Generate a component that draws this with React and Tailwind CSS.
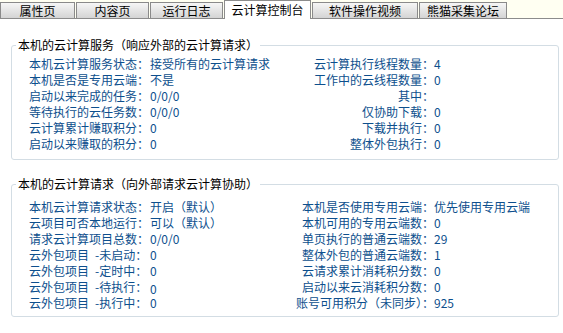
import React from "react";

const tabs = [
  { t: "属性页", w: "w-[75px]" },
  { t: "内容页", w: "w-[73px]" },
  { t: "运行日志", w: "w-[73px]" },
  { t: "云计算控制台", w: "w-[87px]", active: true },
  { t: "软件操作视频", w: "w-[106px]" },
  { t: "熊猫采集论坛", w: "w-[88px]" },
];

const box1 = [
  ["本机云计算服务状态：", "接受所有的云计算请求", "云计算执行线程数量：", "4"],
  ["本机是否是专用云端：", "不是", "工作中的云线程数量：", "0"],
  ["启动以来完成的任务：", "0/0/0", "其中：", ""],
  ["等待执行的云任务数：", "0/0/0", "仅协助下载：", "0"],
  ["云计算累计赚取积分：", "0", "下载并执行：", "0"],
  ["启动以来赚取的积分：", "0", "整体外包执行：", "0"],
];

const box2 = [
  ["本机云计算请求状态：", "开启（默认）", "本机是否使用专用云端：", "优先使用专用云端"],
  ["云项目可否本地运行：", "可以（默认）", "本机可用的专用云端数：", "0"],
  ["请求云计算项目总数：", "0/0/0", "单页执行的普通云端数：", "29"],
  ["云外包项目\u2002-未启动：", "0", "整体外包的普通云端数：", "1"],
  ["云外包项目\u2002-定时中：", "0", "云请求累计消耗积分数：", "0"],
  ["云外包项目\u2002-待执行：", "0", "启动以来云消耗积分数：", "0", true],
  ["云外包项目\u2002-执行中：", "0", "账号可用积分（未同步）：", "925"],
];

function Box({ title, rows, className }) {
  return (
    <fieldset
      className={`ml-[11px] w-[548px] border border-[#d3dde4] rounded-[3px] pl-[17px] pr-0 ${className}`}
    >
      <legend className="-ml-[13px] px-[2px] leading-4 text-black">{title}</legend>
      <div className="grid grid-cols-[121px_1fr_auto_124px] leading-4 text-[#0d4f8d]">
        {rows.map((r, i) => (
          <React.Fragment key={i}>
            <div className="whitespace-nowrap">{r[0]}</div>
            <div className="whitespace-nowrap">
              {r[4] ? <span className="inline-block translate-y-[2px]">{r[1]}</span> : r[1]}
            </div>
            <div className="whitespace-nowrap text-right">{r[2]}</div>
            <div className="whitespace-nowrap">{r[3]}</div>
          </React.Fragment>
        ))}
      </div>
    </fieldset>
  );
}

export default function App() {
  return (
    <div className="w-[563px] h-[333px] bg-white overflow-hidden text-[12px] font-['Noto_Sans_CJK_SC',sans-serif]">
      <div className="flex items-end h-[19px] bg-[#fffff2] border-b border-[#8c8c8c] gap-px">
        {tabs.map((tab) =>
          tab.active ? (
            <div
              key={tab.t}
              className={`${tab.w} h-[19px] -mb-px bg-white border border-b-0 border-[#8c8c8c] flex items-center justify-center leading-4 text-black`}
            >
              {tab.t}
            </div>
          ) : (
            <div
              key={tab.t}
              className={`${tab.w} h-[16px] bg-gradient-to-b from-[#f6f6f6] to-[#d4d4d4] border border-b-0 border-[#8a8a8a] flex items-center justify-center leading-4 text-black`}
            >
              {tab.t}
            </div>
          )
        )}
      </div>
      <Box title="本机的云计算服务（响应外部的云计算请求）" rows={box1} className="mt-[18px] pt-[3px] pb-[7px]" />
      <Box title="本机的云计算请求（向外部请求云计算协助）" rows={box2} className="mt-[16px] pt-[7px] pb-[5px]" />
    </div>
  );
}
